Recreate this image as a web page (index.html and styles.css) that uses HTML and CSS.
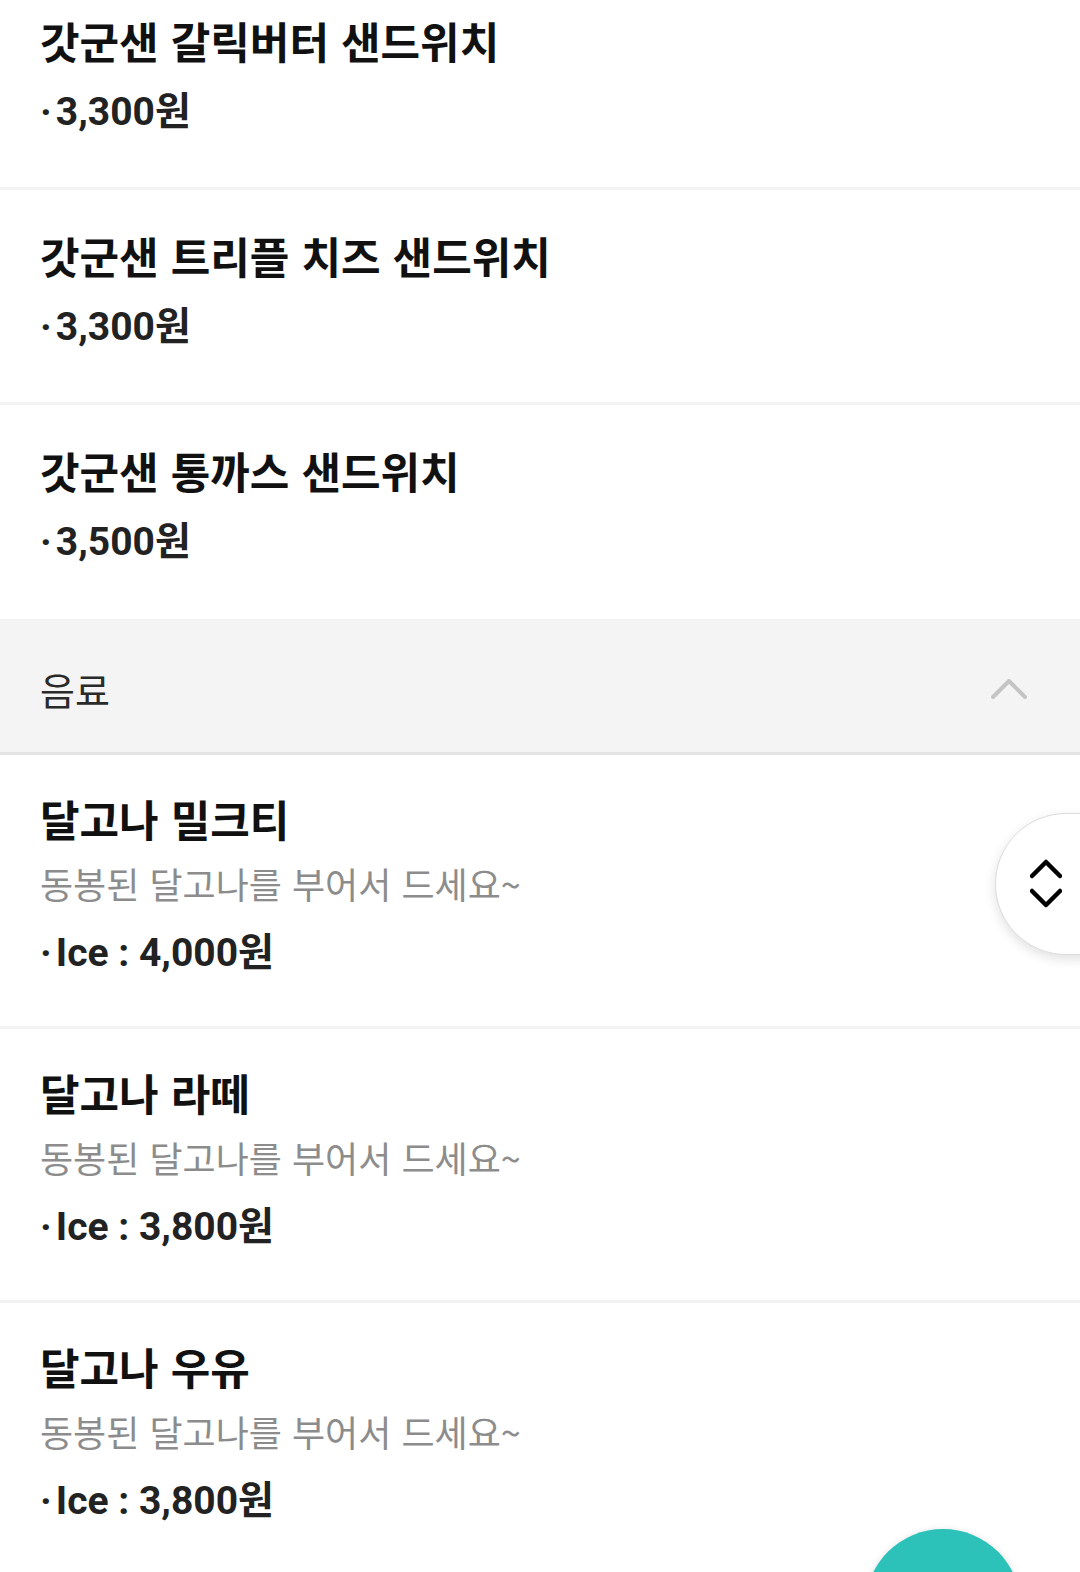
FILE: index.html
```html
<!DOCTYPE html>
<html lang="ko">
<head>
    <meta charset="UTF-8">
    <meta name="viewport" content="width=device-width, initial-scale=1.0">
    <title>메뉴</title>
    <link rel="stylesheet" href="styles.css">
</head>
<body>

    <div class="menu">
        <div class="item">
            <div class="name">갓군샌 갈릭버터 샌드위치</div>
            <div class="price"><span class="dot">·</span>3,300원</div>
        </div>
        <div class="item">
            <div class="name">갓군샌 트리플 치즈 샌드위치</div>
            <div class="price"><span class="dot">·</span>3,300원</div>
        </div>
        <div class="item last">
            <div class="name">갓군샌 통까스 샌드위치</div>
            <div class="price"><span class="dot">·</span>3,500원</div>
        </div>

        <div class="category">
            <span>음료</span>
            <svg class="toggle" width="36" height="20" viewBox="0 0 36 20">
                <polyline points="2,18 18,2 34,18" fill="none" stroke="#c4c4c4" stroke-width="4" stroke-linecap="round" stroke-linejoin="round"/>
            </svg>
        </div>

        <div class="item drink">
            <div class="name">달고나 밀크티</div>
            <div class="desc">동봉된 달고나를 부어서 드세요~</div>
            <div class="price"><span class="dot">·</span>Ice : 4,000원</div>
        </div>
        <div class="item drink">
            <div class="name">달고나 라떼</div>
            <div class="desc">동봉된 달고나를 부어서 드세요~</div>
            <div class="price"><span class="dot">·</span>Ice : 3,800원</div>
        </div>
        <div class="item drink last">
            <div class="name">달고나 우유</div>
            <div class="desc">동봉된 달고나를 부어서 드세요~</div>
            <div class="price"><span class="dot">·</span>Ice : 3,800원</div>
        </div>
    </div>

    <!-- floating scroll button -->
    <div class="scroller">
        <svg width="32" height="50" viewBox="0 0 32 50">
            <polyline points="2,17 16,3 30,17" fill="none" stroke="#000" stroke-width="4.5" stroke-linecap="round" stroke-linejoin="round"/>
            <polyline points="2,32 16,46 30,32" fill="none" stroke="#000" stroke-width="4.5" stroke-linecap="round" stroke-linejoin="round"/>
        </svg>
    </div>

    <div class="fab"></div>

</body>
</html>
```
FILE: styles.css
```css
body {
    margin: 0;
    height: 1572px;
    overflow: hidden;
    background-color: #fff;
    font-family: "Noto Sans CJK KR", "Noto Sans", sans-serif;
    color: #111;
    position: relative;
}

/* list is scrolled a little */
.menu {
    margin-top: -25px;
}

.item {
    padding: 37px 40px 47px;
    border-bottom: 3px solid #f3f3f3;
}

.item.last {
    border-bottom: none;
    padding-bottom: 49px;
}

.item.drink {
    padding-top: 35px;
    padding-bottom: 45px;
}

.name {
    font-size: 43px;
    font-weight: 700;
    line-height: 56px;
    color: #111;
}

.desc {
    margin-top: 14px;
    font-size: 36px;
    line-height: 46px;
    color: #8c8c8c;
}

.price {
    margin-top: 16px;
    font-family: Roboto, "Noto Sans CJK KR", sans-serif;
    font-size: 39px;
    font-weight: 700;
    line-height: 56px;
    color: #222;
}

.desc + .price {
    margin-top: 19px;
}

.price .dot {
    margin-right: 4px;
}

.category {
    display: flex;
    justify-content: space-between;
    align-items: center;
    height: 136px;
    padding: 6px 53px 0 40px;
    box-sizing: border-box;
    background-color: #f4f4f4;
    border-bottom: 3px solid #e4e4e4;
    font-size: 38px;
    color: #2a2a2a;
}

.scroller {
    position: absolute;
    left: 995px;
    top: 813px;
    width: 130px;
    height: 142px;
    box-sizing: border-box;
    padding-left: 34px;
    display: flex;
    align-items: center;
    background-color: #fff;
    border: 1px solid #dcdcdc;
    border-radius: 71px 0 0 71px;
    box-shadow: 0 4px 12px rgba(0, 0, 0, 0.12);
}

.fab {
    position: absolute;
    left: 865px;
    top: 1529px;
    width: 156px;
    height: 156px;
    border-radius: 50%;
    background-color: #2cc1b9;
    box-shadow: 0 2px 8px rgba(0, 0, 0, 0.15);
}
```
